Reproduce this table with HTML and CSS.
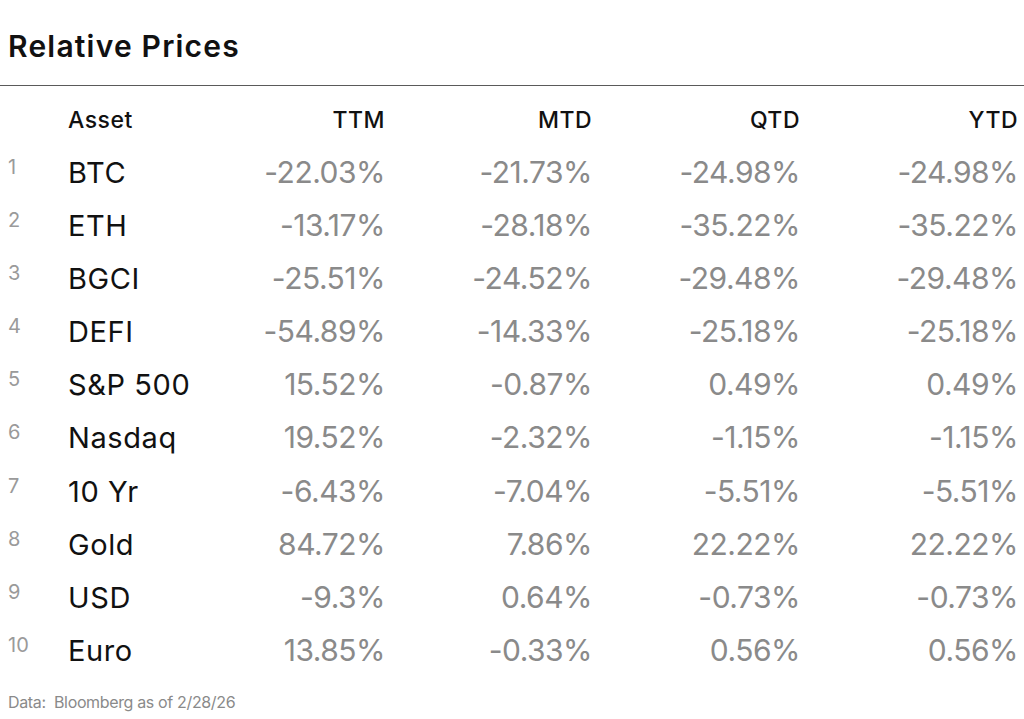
FILE: index.html
```html
<!DOCTYPE html>
<html lang="en">
<head>
<meta charset="utf-8">
<title>Relative Prices</title>
<link rel="stylesheet" href="styles.css">
</head>
<body>
<main class="page">
  <header class="page-head">
    <h1 class="title">Relative Prices</h1>
  </header>
  <hr class="rule">
  <div class="table">
    <div class="row head">
      <span class="num"></span>
      <span class="asset">Asset</span>
      <span class="val">TTM</span>
      <span class="val">MTD</span>
      <span class="val">QTD</span>
      <span class="val">YTD</span>
    </div>
    <div class="row"><span class="num">1</span><span class="asset">BTC</span><span class="val">-22.03%</span><span class="val">-21.73%</span><span class="val">-24.98%</span><span class="val">-24.98%</span></div>
    <div class="row"><span class="num">2</span><span class="asset">ETH</span><span class="val">-13.17%</span><span class="val">-28.18%</span><span class="val">-35.22%</span><span class="val">-35.22%</span></div>
    <div class="row"><span class="num">3</span><span class="asset">BGCI</span><span class="val">-25.51%</span><span class="val">-24.52%</span><span class="val">-29.48%</span><span class="val">-29.48%</span></div>
    <div class="row"><span class="num">4</span><span class="asset">DEFI</span><span class="val">-54.89%</span><span class="val">-14.33%</span><span class="val">-25.18%</span><span class="val">-25.18%</span></div>
    <div class="row"><span class="num">5</span><span class="asset">S&amp;P 500</span><span class="val">15.52%</span><span class="val">-0.87%</span><span class="val">0.49%</span><span class="val">0.49%</span></div>
    <div class="row"><span class="num">6</span><span class="asset">Nasdaq</span><span class="val">19.52%</span><span class="val">-2.32%</span><span class="val">-1.15%</span><span class="val">-1.15%</span></div>
    <div class="row"><span class="num">7</span><span class="asset">10 Yr</span><span class="val">-6.43%</span><span class="val">-7.04%</span><span class="val">-5.51%</span><span class="val">-5.51%</span></div>
    <div class="row"><span class="num">8</span><span class="asset">Gold</span><span class="val">84.72%</span><span class="val">7.86%</span><span class="val">22.22%</span><span class="val">22.22%</span></div>
    <div class="row"><span class="num">9</span><span class="asset">USD</span><span class="val">-9.3%</span><span class="val">0.64%</span><span class="val">-0.73%</span><span class="val">-0.73%</span></div>
    <div class="row"><span class="num">10</span><span class="asset">Euro</span><span class="val">13.85%</span><span class="val">-0.33%</span><span class="val">0.56%</span><span class="val">0.56%</span></div>
  </div>
  <p class="source">Data:&nbsp; Bloomberg as of 2/28/26</p>
</main>
</body>
</html>
```

FILE: styles.css
```css
html, body {
  margin: 0;
  padding: 0;
  background: #ffffff;
}

body {
  font-family: Inter, "Liberation Sans", Arial, sans-serif;
  color: #111111;
}

.page {
  width: 1024px;
  height: 719px;
  overflow: hidden;
}

.page-head {
  padding: 28px 8px 0;
}

.title {
  margin: 0;
  font-size: 30px;
  line-height: 36px;
  font-weight: 600;
  letter-spacing: 1.2px;
  color: #111111;
}

.rule {
  margin: 21px 0 0;
  border: 0;
  height: 1px;
  background: #5a5a5a;
}

.table {
  margin-top: 9px;
  padding: 0 6px 0 8px;
}

.row {
  display: grid;
  grid-template-columns: 60px 110px 207px 207px 208px 218px;
  height: 53.2px;
}

.row.head {
  height: 50.5px;
}

.num {
  font-size: 20px;
  line-height: 24px;
  padding-top: 9px;
  color: #9a9a9a;
}

.asset {
  font-size: 29px;
  line-height: 53.2px;
  color: #111111;
  letter-spacing: 0.6px;
  white-space: nowrap;
}

.val {
  font-size: 30px;
  line-height: 53.2px;
  text-align: right;
  color: #8a8a8a;
  letter-spacing: -0.5px;
  white-space: nowrap;
}

.head .asset,
.head .val {
  font-size: 23px;
  line-height: 50.5px;
  font-weight: 500;
  color: #111111;
  letter-spacing: 0.5px;
}

.source {
  margin: 15px 0 0;
  padding: 0 8px;
  font-size: 16px;
  line-height: 20px;
  color: #8a8a8a;
  letter-spacing: -0.35px;
}
```
